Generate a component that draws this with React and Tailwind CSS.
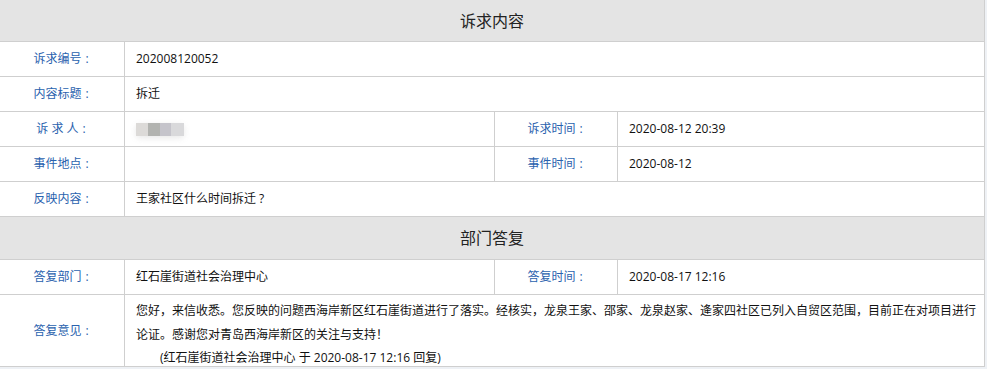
import React from "react";

const font = { fontFamily: '"Open Sans", "Noto Sans CJK SC", sans-serif' };

const Label = ({ text, className = "" }) => (
  <div
    className={`flex items-center justify-center shrink-0 border-r border-[#cfcfcf] text-[12px] text-[#2a62ae] ${className}`}
  >
    <span>{text}</span>
    <span className="pl-[4px] pr-[2px]">:</span>
  </div>
);

const Value = ({ children, className = "" }) => (
  <div className={`flex items-center pl-[11px] text-[12px] text-[#111] ${className}`}>
    {children}
  </div>
);

const Header = ({ title, h }) => (
  <div
    className={`${h} flex items-center justify-center bg-[#e4e4e4] border-b border-[#cfcfcf] text-[16px] text-[#222]`}
  >
    {title}
  </div>
);

const Row = ({ children, h = "h-[35px]" }) => (
  <div className={`${h} flex border-b border-[#cfcfcf]`}>{children}</div>
);

const Blur = () => (
  <div className="flex h-[13px] rounded-sm shadow-[0_2px_6px_rgba(230,230,230,0.9)]">
    <span className="w-[12px] bg-[#dcdad8]" />
    <span className="w-[12px] bg-[#b2b3b0]" />
    <span className="w-[11px] bg-[#c5c4cb]" />
    <span className="w-[13px] bg-[#d9d9db]" />
  </div>
);

export default function App() {
  return (
    <div className="w-[987px] h-[369px] bg-[#eef1f5]" style={font}>
      <div className="w-[985px] bg-white border-r border-[#cfcfcf]">
        <Header title="诉求内容" h="h-[42px]" />
        <Row>
          <Label className="w-[125px]" text="诉求编号" />
          <Value>202008120052</Value>
        </Row>
        <Row>
          <Label className="w-[125px]" text="内容标题" />
          <Value>拆迁</Value>
        </Row>
        <Row>
          <Label className="w-[125px]" text={"诉\u00a0求\u00a0人"} />
          <Value className="w-[370px] shrink-0 border-r border-[#cfcfcf] pl-[4px]">
            <Blur />
          </Value>
          <Label className="w-[123px]" text="诉求时间" />
          <Value>2020-08-12 20:39</Value>
        </Row>
        <Row>
          <Label className="w-[125px]" text="事件地点" />
          <Value className="w-[370px] shrink-0 border-r border-[#cfcfcf]" />
          <Label className="w-[123px]" text="事件时间" />
          <Value>2020-08-12</Value>
        </Row>
        <Row>
          <Label className="w-[125px]" text="反映内容" />
          <Value>王家社区什么时间拆迁 ?</Value>
        </Row>
        <Header title="部门答复" h="h-[43px]" />
        <Row>
          <Label className="w-[125px]" text="答复部门" />
          <Value className="w-[370px] shrink-0 border-r border-[#cfcfcf]">
            红石崖街道社会治理中心
          </Value>
          <Label className="w-[123px]" text="答复时间" />
          <Value>2020-08-17 12:16</Value>
        </Row>
        <Row h="h-[72px]">
          <Label className="w-[125px]" text="答复意见" />
          <div className="pl-[11px] pr-2 pt-[4px] text-[12px] leading-[23.5px] text-[#111]">
            <p>
              您好，来信收悉。您反映的问题西海岸新区红石崖街道进行了落实。经核实，龙泉王家、邵家、龙泉赵家、逄家四社区已列入自贸区范围，目前正在对项目进行论证。感谢您对青岛西海岸新区的关注与支持！
            </p>
            <p className="pl-[24px]">
              (红石崖街道社会治理中心 于 2020-08-17 12:16 回复)
            </p>
          </div>
        </Row>
      </div>
    </div>
  );
}
